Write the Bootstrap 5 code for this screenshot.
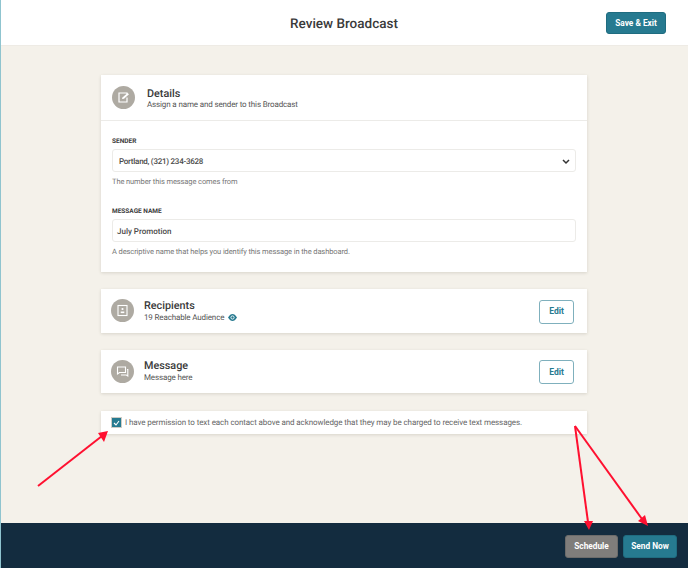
<!DOCTYPE html>
<html lang="en">
<head>
<meta charset="utf-8">
<title>Review Broadcast</title>
<link href="https://cdn.jsdelivr.net/npm/bootstrap@5.3.0/dist/css/bootstrap.min.css" rel="stylesheet">
<style>
html,body{height:100%;margin:0}
body{font-family:Roboto,"Liberation Sans",sans-serif;color:#3a3a3a;background:#f4f1ea;overflow:hidden;text-rendering:geometricPrecision}
.shell{position:relative;width:688px;height:568px;display:flex;flex-direction:column;border-left:1px solid #8fc4cf}
.topbar{height:46px;background:#fff;border-bottom:1px solid #eeebe5;display:flex;align-items:center;justify-content:center;position:relative;flex:none}
.topbar h1{font-size:13.500px;font-weight:500;margin:3px 1px 0 0;letter-spacing:0;color:#3a3a3a}
.btn-save{position:absolute;left:605px;top:12px;width:60px;height:22px;padding:0;font-size:8.300px;font-weight:700;background:#267a90;border:1px solid #1f6c80;color:#fff;border-radius:3px}
.main{flex:1 1 auto;display:flex;flex-direction:column;align-items:center;padding-top:29px;padding-right:1px}
.panel{width:486px;background:#fff;box-shadow:0 1px 3px rgba(70,60,40,.16);border-radius:0;border:0;flex:none}
.panel-head{height:46px;border-bottom:1px solid #ecebe8;display:flex;align-items:center;padding:0 11px}
.head-text{padding-top:2px}
.disc{width:23px;height:23px;border-radius:50%;background:#aeaaa2;display:flex;align-items:center;justify-content:center;flex:none}
.ttl{font-size:10.800px;font-weight:500;line-height:12px;color:#3a3a3a}
.sub{font-size:8px;letter-spacing:-.14px;line-height:10px;color:#555}
.panel-body-own{padding:16px 11px 0;height:151px}
.lbl{font-size:6.500px;font-weight:700;line-height:8px;color:#3c3c3c;margin-bottom:4px;text-transform:uppercase}
.fld{height:23px;border:1px solid #ecebe8;border-radius:3px;font-size:8px;font-weight:500;color:#4a4a4a;display:flex;align-items:center;background:#fff}
.hint{font-size:7.500px;letter-spacing:-.1px;line-height:9px;color:#777;margin-top:5px}
.row-card{height:43.500px;flex-direction:row;align-items:center;padding:0 11px 0 10px;margin-top:17px}
.row-card .disc{margin-right:10px}
.btn-edit{margin-left:auto;width:35px;height:24px;padding:0;font-size:8.500px;font-weight:700;color:#267a90;background:#fff;border:1.500px solid #7fb0bd;border-radius:3px;margin-right:2px;margin-top:2px}
.check-card{height:23px;margin-top:18px;flex-direction:row;align-items:center;padding:0 11px;font-size:8px;letter-spacing:-.09px;color:#666}
.check-text{padding-top:1px}
.tick{width:9px;height:9px;background:#267a90;outline:1px solid #cfccc6;margin-right:4px;display:flex;align-items:center;justify-content:center;flex:none}
.foot{height:45px;background:#132c3f;display:flex;align-items:center;justify-content:flex-end;gap:5px;padding:1px 11px 0 0;flex:none}
.btn-sched,.btn-send{height:23px;padding:0;font-size:8.300px;font-weight:700;color:#fff;border-radius:3px}
.btn-sched{width:53px;background:#7f7d7b;border:1px solid #6c6b6a}
.btn-send{width:54px;background:#267a90;border:1px solid #1f6c80}
.marks{position:absolute;left:-1px;top:0;pointer-events:none}
.gap-name{margin-top:21px}
.pad-sel{padding:2px 5px 0 6px}
.sel-val{letter-spacing:-.25px}
.pad-name{padding:2px 0 0 4px}
.ttl-tall{line-height:14px}
</style>
</head>
<body>
<div class="shell">
  <div class="topbar">
    <h1>Review Broadcast</h1>
    <button class="btn btn-save" type="button">Save &amp; Exit</button>
  </div>
  <div class="main">
    <div class="card panel">
      <div class="panel-head">
        <div class="disc me-2"><svg width="13" height="13" viewBox="0 0 13 13" fill="none" stroke="#fff" stroke-width="1.200"><path d="M10 6.500V11H2V2h8v1"/><path d="M5 8l.4-1.400L10.600 2 12 3.200 7 7.800z" fill="#fff" stroke="none"/></svg></div>
        <div class="ms-1 head-text"><div class="ttl">Details</div><div class="sub">Assign a name and sender to this Broadcast</div></div>
      </div>
      <div class="panel-body-own">
        <div class="lbl">Sender</div>
        <div class="fld pad-sel justify-content-between"><span class="sel-val">Portland, (321) 234-3628</span><svg width="8" height="6" viewBox="0 0 8 6" fill="none" stroke="#333" stroke-width="1.500"><path d="M1 1l3 3 3-3"/></svg></div>
        <div class="hint">The number this message comes from</div>
        <div class="lbl gap-name">Message Name</div>
        <div class="fld pad-name">July Promotion</div>
        <div class="hint">A descriptive name that helps you identify this message in the dashboard.</div>
      </div>
    </div>
    <div class="card panel row-card">
      <div class="disc"><svg width="13" height="13" viewBox="0 0 13 13" fill="none" stroke="#fff" stroke-width="1.100"><rect x="2" y="1.500" width="9" height="10"/><circle cx="6.500" cy="5" r="1.100" fill="#fff" stroke="none"/><path d="M4.700 8.300h3.600" stroke-width="1.600"/></svg></div>
      <div><div class="ttl ttl-tall">Recipients</div>
      <div class="sub d-flex align-items-center">19 Reachable Audience<svg class="ms-1" width="9" height="7" viewBox="0 0 9 7"><path d="M0 3.500C1.500 1 3 0 4.500 0S7.500 1 9 3.500C7.500 6 6 7 4.500 7S1.500 6 0 3.500z" fill="#267a90"/><circle cx="4.500" cy="3.500" r="1.600" fill="none" stroke="#fff" stroke-width=".9"/></svg></div></div>
      <button class="btn btn-edit" type="button">Edit</button>
    </div>
    <div class="card panel row-card">
      <div class="disc"><svg width="13" height="13" viewBox="0 0 13 13" fill="none" stroke="#fff" stroke-width="1.100"><path d="M1.500 2h8v5.500h-6l-2 1.500z"/><path d="M11 4.500h.8v6.500l-1.500-1H5"/></svg></div>
      <div><div class="ttl ttl-tall">Message</div><div class="sub">Message here</div></div>
      <button class="btn btn-edit" type="button">Edit</button>
    </div>
    <div class="card panel check-card">
      <span class="tick"><svg width="7" height="6" viewBox="0 0 7 6" fill="none" stroke="#fff" stroke-width="1.100"><path d="M1 3l2 2 3-4"/></svg></span>
      <span class="check-text">I have permission to text each contact above and acknowledge that they may be charged to receive text messages.</span>
    </div>
  </div>
  <div class="foot">
    <button class="btn btn-sched" type="button">Schedule</button>
    <button class="btn btn-send" type="button">Send Now</button>
  </div>
  <svg class="marks" width="688" height="568" viewBox="0 0 688 568">
    <g stroke="#ff1030" stroke-width="2" fill="#ff1030">
      <path d="M38 486 102 436"/><path d="M108 431 98 433 104 442z" stroke="none"/>
      <path d="M575 426 588 522"/><path d="M589 530 584 521 593 521z" stroke="none"/>
      <path d="M575 426 642 519"/><path d="M648 526 638 521 645 515z" stroke="none"/>
    </g>
  </svg>
</div>
</body>
</html>
